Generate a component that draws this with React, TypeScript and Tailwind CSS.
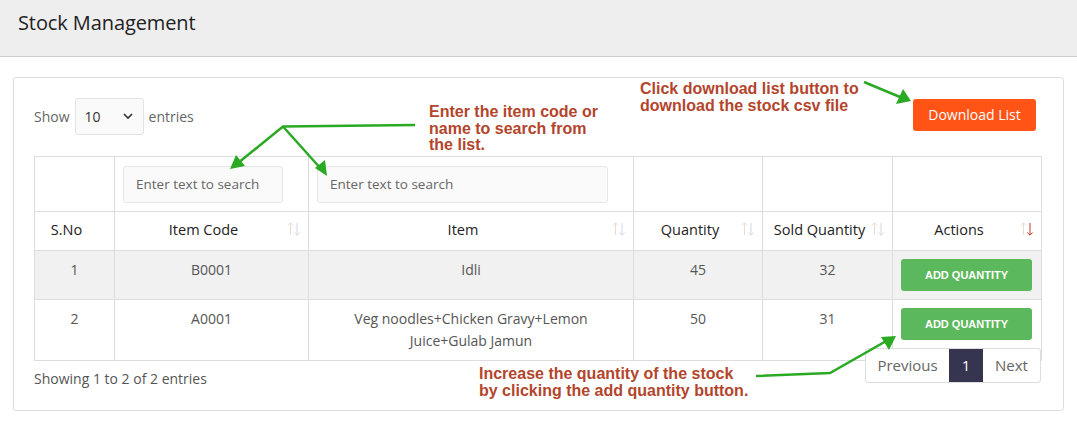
import React from 'react';

const SortIcon: React.FC<{ active?: boolean }> = ({ active }) => (
  <svg width="16" height="16" viewBox="0 0 16 16" className="absolute right-[6px] top-[9px]">
    <path d="M4.5 14V2 M1.8 4.5 L4.5 1.8 L7.2 4.5" stroke="#e6ddd0" strokeWidth="1" fill="none" />
    <path d="M11 2v12 M8.3 11.5 L11 14.2 L13.7 11.5" stroke={active ? '#c0392b' : '#cfd8e0'} strokeWidth="1" fill="none" />
  </svg>
);

const rows = [
  { no: 1, code: 'B0001', item: 'Idli', qty: 45, sold: 32 },
  { no: 2, code: 'A0001', item: 'Veg noodles+Chicken Gravy+Lemon Juice+Gulab Jamun', qty: 50, sold: 31 },
];

const headers = [
  { label: 'S.No', sort: false },
  { label: 'Item Code', sort: true },
  { label: 'Item', sort: true },
  { label: 'Quantity', sort: true },
  { label: 'Sold Quantity', sort: true },
  { label: 'Actions', sort: true, active: true },
];

const Note: React.FC<{ className: string; children: React.ReactNode }> = ({ className, children }) => (
  <div
    className={`absolute text-[16px] leading-[16.5px] font-bold text-[#b3452c] ${className}`}
    style={{ fontFamily: '"Liberation Sans", Arial, sans-serif' }}
  >
    {children}
  </div>
);

export default function App() {
  return (
    <div className="relative w-[1077px] h-[445px] bg-white text-[#333] overflow-hidden" style={{ fontFamily: '"Open Sans", sans-serif' }}>
      <header className="h-[57px] bg-[#eeeeee] border-b border-[#cccccc] px-[18px] pt-[9px]">
        <h1 className="text-[20px] leading-[28px] text-[#222] tracking-[-0.1px]">Stock Management</h1>
      </header>

      <div className="px-[13px] pt-[20px]">
        <div className="border border-[#dddddd] rounded-[3px] h-[334px] px-[20px] pt-[20px]">
          <div className="flex items-center justify-between h-[38px]">
            <div className="flex items-center text-[14px] text-[#666] mt-[-2px]">
              <span>Show</span>
              <div className="mx-[5px] w-[69px] h-[37px] border border-[#e3e3e3] rounded-[3px] bg-[#fafafa] flex items-center justify-between px-[9px] text-[#333]">
                <span>10</span>
                <svg width="12" height="12" viewBox="0 0 12 12">
                  <path d="M2 4 L6 8 L10 4" stroke="#333" strokeWidth="1.6" fill="none" />
                </svg>
              </div>
              <span>entries</span>
            </div>
            <button className="mr-[7px] mt-[-5px] w-[123px] h-[32px] rounded-[3px] bg-[#ff5416] text-white text-[14px]">Download List</button>
          </div>

          <table className="mt-[20px] w-[1007px] border-collapse table-fixed text-[14px]">
            <colgroup>
              <col className="w-[80px]" />
              <col className="w-[194px]" />
              <col className="w-[325px]" />
              <col className="w-[129px]" />
              <col className="w-[130px]" />
              <col className="w-[149px]" />
            </colgroup>
            <thead>
              <tr className="h-[55px]">
                <td className="border border-[#dddddd]" />
                <td className="border border-[#dddddd] px-[8px]">
                  <div className="h-[37px] w-[160px] border border-[#e6e6e6] rounded-[3px] bg-[#fafafa] flex items-center px-[12px] text-[#666] text-[13.5px]">Enter text to search</div>
                </td>
                <td className="border border-[#dddddd] px-[8px]">
                  <div className="h-[37px] w-[291px] border border-[#e6e6e6] rounded-[3px] bg-[#fafafa] flex items-center px-[12px] text-[#666] text-[13.5px]">Enter text to search</div>
                </td>
                <td className="border border-[#dddddd]" />
                <td className="border border-[#dddddd]" />
                <td className="border border-[#dddddd]" />
              </tr>
              <tr className="h-[39px]">
                {headers.map((h) => (
                  <th key={h.label} className="relative border border-[#dddddd] font-normal text-[#222] text-center pl-[4px] pr-[20px] pb-[3px] whitespace-nowrap text-[14.5px]">
                    {h.label}
                    {h.sort && <SortIcon active={h.active} />}
                  </th>
                ))}
              </tr>
            </thead>
            <tbody className="text-[#555]">
              {rows.map((r, i) => (
                <tr key={r.no} className={i === 0 ? 'bg-[#f1f1f1] h-[49px]' : 'h-[61px]'}>
                  <td className="border border-[#dddddd] text-center align-top pt-[8px]">{r.no}</td>
                  <td className="border border-[#dddddd] text-center align-top pt-[8px]">{r.code}</td>
                  <td className="border border-[#dddddd] text-center align-top pt-[8px] px-[30px] leading-[22px]">{r.item}</td>
                  <td className="border border-[#dddddd] text-center align-top pt-[8px]">{r.qty}</td>
                  <td className="border border-[#dddddd] text-center align-top pt-[8px]">{r.sold}</td>
                  <td className="border border-[#dddddd] align-top pt-[8px] pl-[8px]">
                    <button className="w-[131px] h-[32px] rounded-[3px] bg-[#5cb85c] text-white text-[11px] font-bold uppercase" style={{ fontFamily: '"Liberation Sans", Arial, sans-serif' }}>Add Quantity</button>
                  </td>
                </tr>
              ))}
            </tbody>
          </table>

          <div className="flex justify-between items-start w-[1007px]">
            <div className="mt-[7px] text-[14px] text-[#555]">Showing 1 to 2 of 2 entries</div>
            <div className="mt-[-13px] h-[35px] flex border border-[#dddddd] rounded-[3px] text-[15px] text-[#666] bg-white relative">
              <div className="w-[83px] flex items-center justify-center">Previous</div>
              <div className="w-[34px] flex items-center justify-center bg-[#353550] text-white">1</div>
              <div className="w-[57px] flex items-center justify-center">Next</div>
            </div>
          </div>
        </div>
      </div>

      <Note className="left-[429px] top-[104px]">Enter the item code or<br />name to search from<br />the list.</Note>
      <Note className="left-[640px] top-[81px]">Click download list button to<br />download the stock csv file</Note>
      <Note className="left-[479px] top-[366px]">Increase the quantity of the stock<br />by clicking the add quantity button.</Note>

      <svg className="absolute left-0 top-0 pointer-events-none" width="1077" height="445" viewBox="0 0 1077 445">
        <g stroke="#2aaa22" strokeWidth="2.5" fill="none">
          <path d="M415 125 L283 126.5 L238 163" />
          <path d="M283 126.5 L322 170" />
          <path d="M864 82 L900 97" />
          <path d="M756 376 L830 373 L888 340" />
        </g>
        <g fill="#2aaa22">
          <polygon points="230,169 236,155 245,166" />
          <polygon points="327,176 315,168 325,160" />
          <polygon points="911,101 896,104 903,89" />
          <polygon points="896,336 881,337 889,350" />
        </g>
      </svg>
    </div>
  );
}
